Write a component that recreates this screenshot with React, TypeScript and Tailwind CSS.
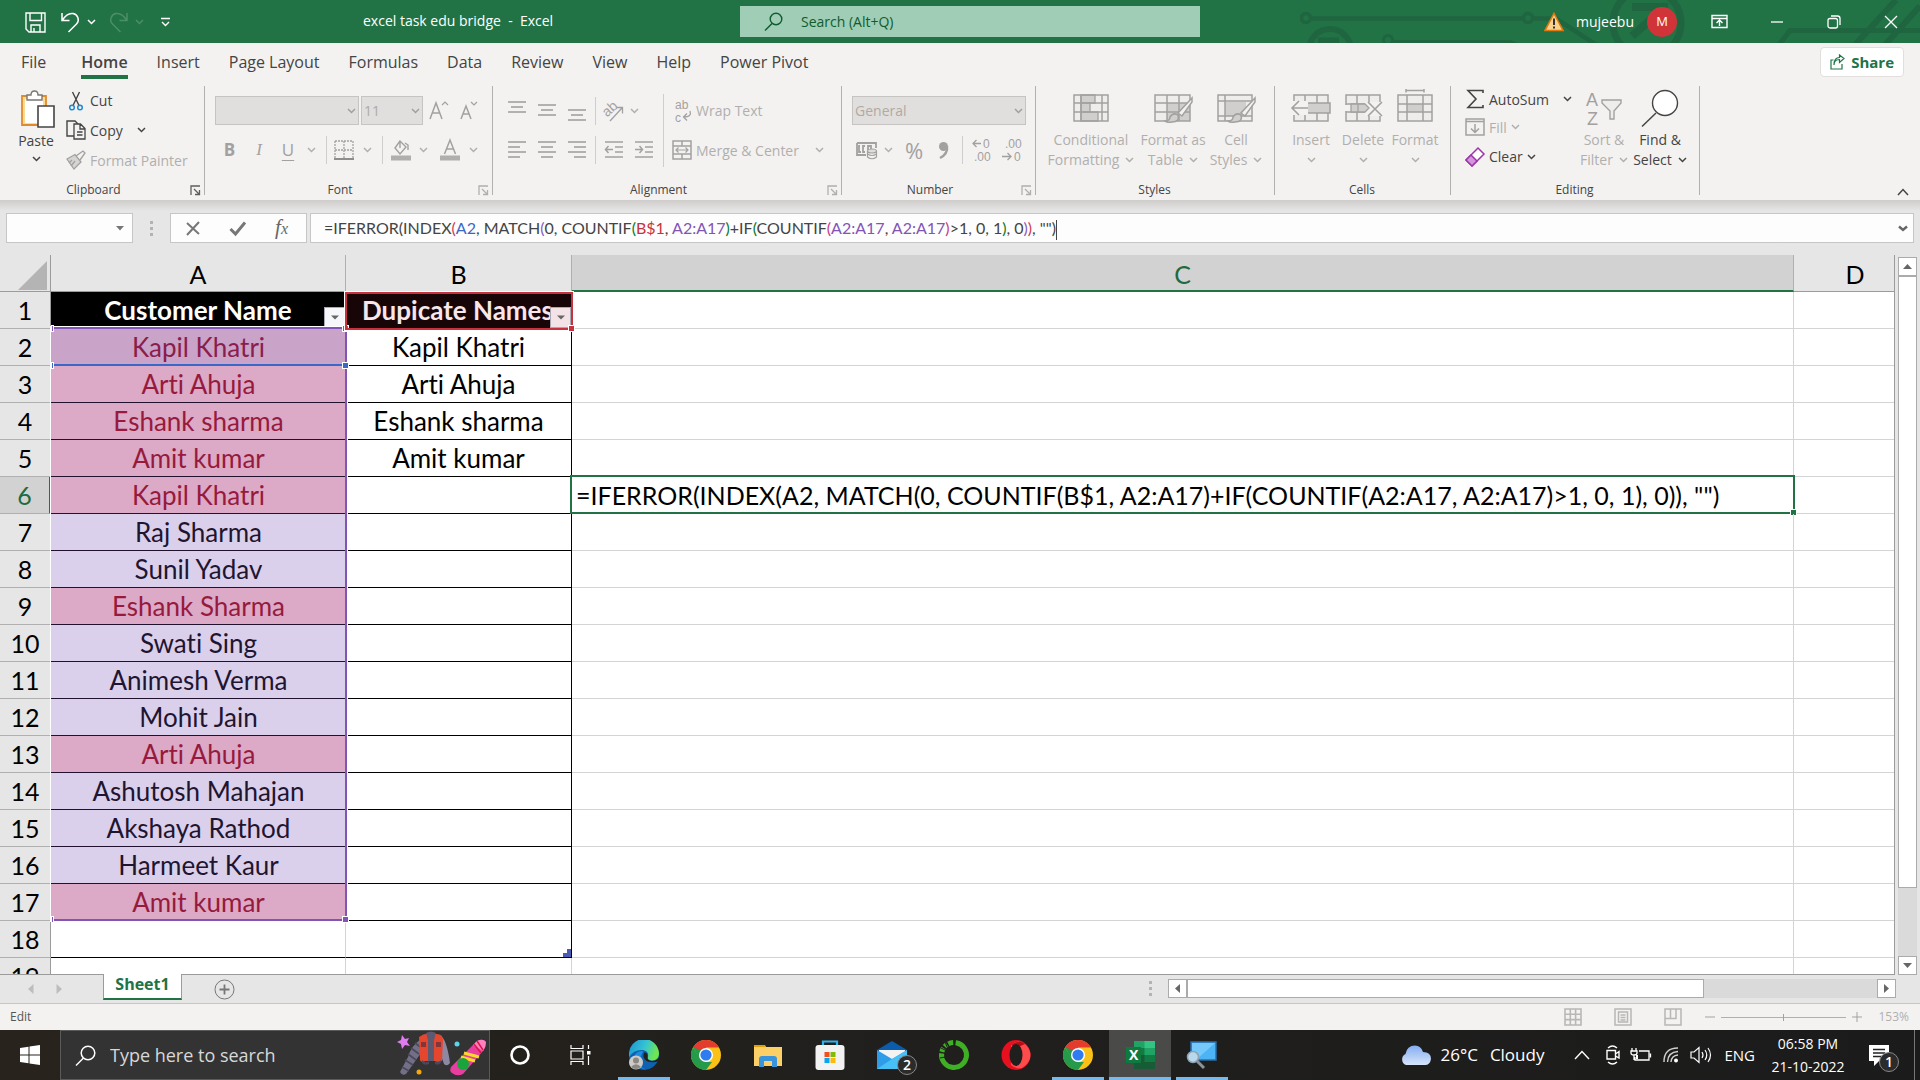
import React from "react";
import type { ReactNode } from "react";

/* ---------- small shared pieces ---------- */

function Svg({ w, h, children, className = "" }: { w: number; h: number; children: ReactNode; className?: string }) {
  return (
    <svg width={w} height={h} viewBox={`0 0 ${w} ${h}`} fill="none" className={`shrink-0 overflow-visible ${className}`} aria-hidden="true">
      {children}
    </svg>
  );
}

function Chevron({ color = "#b1afad" }: { color?: string }) {
  return (
    <Svg w={9} h={6}>
      <path d="M1 1 L4.5 4.5 L8 1" stroke={color} strokeWidth="1.5" />
    </Svg>
  );
}

const DARK = "#444444";
const ICON_FONT = "Liberation Sans, sans-serif";

function Tool({ label, className = "", children }: { label: string; className?: string; children: ReactNode }) {
  return (
    <button type="button" aria-label={label} title={label} className={`flex h-7 shrink-0 items-center justify-center ${className}`}>
      {children}
    </button>
  );
}

function Rule({ className = "" }: { className?: string }) {
  return <div className={`w-px shrink-0 bg-[#d0cecc] ${className}`} />;
}

function Group({ name, width, launcher, children }: { name: string; width: string; launcher?: string; children: ReactNode }) {
  return (
    <section aria-label={name} className={`flex h-[109px] shrink-0 flex-col border-r border-[#b3b0ad] ${width}`}>
      <div className="flex flex-1">{children}</div>
      <div className="-mb-[5px] flex h-5 items-center pr-px text-[12px] leading-5 text-[#444]">
        <span className="flex-1 text-center">{name}</span>
        {launcher && (
          <button type="button" aria-label={`${name} settings`} className="flex w-4 justify-center">
            <Svg w={11} h={11}>
              <path d="M1 10V1H10M4 4L9 9M9.5 5V9.5H5" stroke={launcher} strokeWidth="1.3" />
            </Svg>
          </button>
        )}
      </div>
    </section>
  );
}

function Lines({ rows }: { rows: [number, number, number][] }) {
  return (
    <Svg w={18} h={24}>
      {rows.map(([x1, x2, y]) => (
        <path key={y} d={`M${x1} ${y}H${x2}`} stroke="#a3a1a0" strokeWidth="1.6" />
      ))}
    </Svg>
  );
}

function SelectBox({ label, value, width }: { label: string; value: string; width: string }) {
  return (
    <div className={`relative h-[29px] shrink-0 ${width}`}>
      <select
        aria-label={label}
        disabled
        className="h-full w-full appearance-none border border-[#c6c4c2] bg-[#e1dfdd] px-0.5 text-[14px] text-[#b1a9a3] opacity-100"
      >
        <option>{value}</option>
      </select>
      <span className="pointer-events-none absolute right-[3px] top-3">
        <Chevron color="#a19f9d" />
      </span>
    </div>
  );
}

/* ---------- title bar ---------- */

function CircuitArt() {
  return (
    <svg viewBox="0 0 620 43" className="absolute right-0 top-0 h-[43px] w-[620px]" fill="none" stroke="#1f6540" aria-hidden="true">
      <circle cx="6" cy="18" r="4.5" strokeWidth="3.5" />
      <path d="M11 18.500H222M234 18.500H256L298 46" strokeWidth="4.500" />
      <circle cx="228" cy="18" r="4.500" strokeWidth="3.500" />
      <circle cx="30" cy="50" r="21" strokeWidth="6" />
      <path d="M18 40.500H39" strokeWidth="6" />
      <circle cx="88" cy="40" r="4.500" strokeWidth="3" />
      <path d="M94 42H210L220 46" strokeWidth="4" />
      <circle cx="347" cy="23" r="34" strokeWidth="7" />
      <path d="M332 7H364V36M364 8L332 36" strokeWidth="8" />
      <path d="M478 46L490 30.500H620" strokeWidth="5" />
      <path d="M554 46L596 0M584 46L620 6" strokeWidth="6" />
    </svg>
  );
}

function TitleBar() {
  return (
    <header className="relative flex h-[43px] shrink-0 items-center bg-[#217346] text-[14px] text-white">
      <CircuitArt />
      <div className="flex w-[740px] shrink-0 items-center pl-[25px]">
        <button type="button" aria-label="Save">
          <Svg w={21} h={22}>
            <path d="M1 2H20V21H4L1 18ZM5 2V9.500H16.500V2M6 21V14H15V21M9 17V21" stroke="#fff" strokeWidth="1.4" />
          </Svg>
        </button>
        <button type="button" aria-label="Undo" className="ml-[14px]">
          <Svg w={21} h={22}>
            <path d="M2 2V9.500H9.500M2.500 9C6 3.500 10 2 13 2.500C18 3.500 20 9.500 16.500 13L8.500 21" stroke="#fff" strokeWidth="1.5" />
          </Svg>
        </button>
        <button type="button" aria-label="Undo list" className="ml-[6px]"><Chevron color="#fff" /></button>
        <button type="button" aria-label="Redo" className="ml-3">
          <Svg w={21} h={22}>
            <path d="M19 2V9.500H11.500M18.500 9C15 3.500 11 2 8 2.500C3 3.500 1 9.500 4.500 13L12.500 21" stroke="#4b8f69" strokeWidth="1.5" />
          </Svg>
        </button>
        <button type="button" aria-label="Redo list" className="ml-[6px]"><Chevron color="#4b8f69" /></button>
        <button type="button" aria-label="Customize toolbar" className="ml-4">
          <Svg w={11} h={10}>
            <path d="M1 1.500H10M2 5L5.500 8.500L9 5" stroke="#fff" strokeWidth="1.4" />
          </Svg>
        </button>
        <h1 className="ml-[192px] whitespace-pre pb-0.5">excel task edu bridge  -  Excel</h1>
      </div>
      <label className="flex h-[31px] w-[460px] shrink-0 items-center bg-[#a0cdb5] pl-6">
        <Svg w={19} h={19}>
          <circle cx="12" cy="7" r="5.800" stroke="#0e5c2f" strokeWidth="1.4" />
          <path d="M8 11.500L1 18.500" stroke="#0e5c2f" strokeWidth="1.4" />
        </Svg>
        <input aria-label="Search" placeholder="Search (Alt+Q)" className="ml-[18px] flex-1 bg-transparent outline-none placeholder:text-[#0e5c2f]" />
      </label>
      <div className="relative flex flex-1 items-center justify-end">
        <Svg w={20} h={20}>
          <path d="M10 1.500L19 18.500H1Z" fill="#fbd28b" stroke="#e07a10" strokeWidth="1.6" />
          <path d="M10 6.500V13M10 14.500V16.500" stroke="#333" strokeWidth="2" />
        </Svg>
        <span className="ml-3">mujeebu</span>
        <button type="button" aria-label="Account" className="ml-[13px] size-[30px] rounded-full bg-[#d13438] text-[13px]">M</button>
        <button type="button" aria-label="Ribbon display options" className="ml-[34px]">
          <Svg w={17} h={15}>
            <path d="M1 1.500H16V13.500H1ZM1 4.500H16M8.500 12V6.500M5.500 9L8.500 6L11.500 9" stroke="#fff" strokeWidth="1.4" />
          </Svg>
        </button>
        <button type="button" aria-label="Minimize" className="ml-[42px]">
          <Svg w={14} h={14}><path d="M1 7H13" stroke="#fff" strokeWidth="1.3" /></Svg>
        </button>
        <button type="button" aria-label="Restore" className="ml-[43px]">
          <Svg w={14} h={14}>
            <rect x="1" y="3.500" width="9.500" height="9.500" rx="2" stroke="#fff" strokeWidth="1.3" />
            <path d="M4 1H10.500Q13 1 13 3.500V10" stroke="#fff" strokeWidth="1.3" />
          </Svg>
        </button>
        <button type="button" aria-label="Close" className="ml-[43px] mr-[22px]">
          <Svg w={14} h={14}><path d="M1 1L13 13M13 1L1 13" stroke="#fff" strokeWidth="1.3" /></Svg>
        </button>
      </div>
    </header>
  );
}

/* ---------- ribbon ---------- */

const TABS = ["File", "Home", "Insert", "Page Layout", "Formulas", "Data", "Review", "View", "Help", "Power Pivot"];

function TabStrip() {
  return (
    <nav className="flex h-[37px] shrink-0 items-start justify-between pl-[21px] pr-4 text-[16px] text-[#444]">
      <div className="flex gap-[29px]">
        {TABS.map((t) =>
          t === "Home" ? (
            <button key={t} type="button" className="ml-1.5 h-9 border-b-4 border-[#217346] pt-1.5 font-semibold">{t}</button>
          ) : (
            <button key={t} type="button" className="h-9 border-b-4 border-transparent pt-1.5">{t}</button>
          ),
        )}
      </div>
      <button type="button" className="mt-1 flex h-[30px] items-center gap-1.5 rounded border border-[#e1dfdd] bg-white px-[9px] font-bold text-[#217346]">
        <Svg w={15} h={16}>
          <path d="M3.500 6H1V15H12V10M4 11C4 7 6 5.500 9.500 5.500V8.500L14 4.500L9.500 1V3.500C5.500 3.500 4 6 4 11Z" stroke="#217346" strokeWidth="1.2" />
        </Svg>
        <span className="text-[15px]">Share</span>
      </button>
    </nav>
  );
}

function Clipboard() {
  return (
    <Group name="Clipboard" width="w-[205px]" launcher="#605e5c">
      <button type="button" className="ml-[14px] flex w-[44px] flex-col items-center pt-[3px] text-[14px] leading-5 text-[#444]">
        <Svg w={36} h={40}>
          <path d="M4 7H28V36H4Z" fill="#fadb8f" stroke="#e08a2c" strokeWidth="1.8" />
          <path d="M7 10H25V34H7Z" fill="#fff" />
          <path d="M9 11V6H13Q13 2 16.500 2Q20 2 20 6H24V11Z" fill="#fff" stroke="#797775" strokeWidth="1.4" />
          <path d="M20 17H36V38H20Z" fill="#fff" stroke="#444" strokeWidth="1.6" />
        </Svg>
        <span className="mt-0.5">Paste</span>
        <span className="mt-[5px]"><Chevron color={DARK} /></span>
      </button>
      <div className="ml-2 flex flex-col text-[14px] text-[#444]">
        <button type="button" className="flex h-[29px] items-center gap-1">
          <Svg w={20} h={20}>
            <path d="M6.500 1L13 14.500M13.500 1L7 14.500" stroke="#444" strokeWidth="1.4" />
            <circle cx="6" cy="16.500" r="2.300" stroke="#1e88d0" strokeWidth="1.500" />
            <circle cx="14" cy="16.500" r="2.300" stroke="#1e88d0" strokeWidth="1.500" />
          </Svg>
          Cut
        </button>
        <button type="button" className="flex h-[30px] items-center gap-1">
          <Svg w={20} h={20}>
            <path d="M8 16H1V1H9L12 4" stroke="#444" strokeWidth="1.400" />
            <path d="M8 4H14.500L19 8.500V19H8ZM14 4V9H19M11 12H16.500M11 15H16.500" fill="#f3f2f1" stroke="#444" strokeWidth="1.300" />
          </Svg>
          Copy
          <span className="ml-2.5"><Chevron color={DARK} /></span>
        </button>
        <button type="button" disabled className="flex h-[30px] items-center gap-1 text-[#b1afad]">
          <Svg w={20} h={20}>
            <path d="M1 9L9 4.500L15 12L8 19Z" fill="#d6d4d2" stroke="#a3a1a0" strokeWidth="1.300" />
            <path d="M10 6L17 1L19 3L14 10M3 13L6 10M5 16L9 11" stroke="#a3a1a0" strokeWidth="1.300" />
          </Svg>
          Format Painter
        </button>
      </div>
    </Group>
  );
}

function FontGroup() {
  return (
    <Group name="Font" width="w-[288px]" launcher="#b1afad">
      <div className="pl-2.5 pt-2.5 text-[#a3a1a0]">
        <div className="flex items-center gap-0.5">
          <SelectBox label="Font name" value="" width="w-[144px]" />
          <SelectBox label="Font size" value="11" width="w-[62px]" />
          <Tool label="Grow font" className="ml-1 w-5">
            <Svg w={20} h={22}>
              <path d="M1 19L7 3L13 19M3.500 13H10.500" stroke="#a3a1a0" strokeWidth="1.500" />
              <path d="M13 5L16 2L19 5" stroke="#a3a1a0" strokeWidth="1.200" />
            </Svg>
          </Tool>
          <Tool label="Shrink font" className="ml-2 w-5">
            <Svg w={20} h={22}>
              <path d="M2 19L7 6L12 19M4 14H10" stroke="#a3a1a0" strokeWidth="1.500" />
              <path d="M12 2L15 5L18 2" stroke="#a3a1a0" strokeWidth="1.200" />
            </Svg>
          </Tool>
        </div>
        <div className="mt-[11px] flex items-center text-[17px]">
          <Tool label="Bold" className="w-[29px] font-bold">B</Tool>
          <Tool label="Italic" className="w-[30px] font-['Liberation_Serif',serif] italic">I</Tool>
          <Tool label="Underline" className="w-7 underline underline-offset-4">U</Tool>
          <Tool label="Underline style" className="w-[18px]"><Chevron /></Tool>
          <Rule className="ml-1.5 h-7" />
          <Tool label="Borders" className="ml-px w-8">
            <Svg w={20} h={20}>
              <path d="M1 1H19V18M1 1V18M1 10H19M10 1V18" stroke="#a3a1a0" strokeWidth="1.300" strokeDasharray="2 1" />
              <path d="M0 19H20" stroke="#8f8d8b" strokeWidth="2" />
            </Svg>
          </Tool>
          <Tool label="Border style" className="w-[14px]"><Chevron /></Tool>
          <Rule className="ml-2 h-7" />
          <Tool label="Fill color" className="w-9">
            <Svg w={20} h={22}>
              <path d="M9 2L4 9L9 15L15 8ZM9 2V9M14 4L17 6V11" stroke="#a3a1a0" strokeWidth="1.400" />
              <path d="M0 19H20" stroke="#b1afad" strokeWidth="5" />
            </Svg>
          </Tool>
          <Tool label="Fill colors" className="w-2"><Chevron /></Tool>
          <Tool label="Font color" className="ml-1 w-[38px]">
            <Svg w={20} h={22}>
              <path d="M4.500 15L10 1L15.500 15M6.500 10H13.500" stroke="#a3a1a0" strokeWidth="1.500" />
              <path d="M0 19H20" stroke="#b1afad" strokeWidth="5" />
            </Svg>
          </Tool>
          <Tool label="Font colors" className="w-2"><Chevron /></Tool>
        </div>
      </div>
    </Group>
  );
}

function Alignment() {
  return (
    <Group name="Alignment" width="w-[349px]" launcher="#b1afad">
      <div className="pl-[9px] pt-2.5">
        <div className="flex h-[29px] items-center">
          <Tool label="Top align" className="w-[30px]"><Lines rows={[[0, 18, 3], [3, 15, 8], [0, 18, 13]]} /></Tool>
          <Tool label="Middle align" className="w-[30px]"><Lines rows={[[0, 18, 6], [3, 15, 11], [0, 18, 16]]} /></Tool>
          <Tool label="Bottom align" className="w-[30px]"><Lines rows={[[0, 18, 11], [3, 15, 16], [0, 18, 21]]} /></Tool>
          <Rule className="ml-[3px] h-7" />
          <Tool label="Orientation" className="w-[34px]">
            <Svg w={22} h={22}>
              <text x="2" y="14" fontSize="14" fontFamily={ICON_FONT} fill="#a3a1a0" transform="rotate(-42 8 12)">ab</text>
              <path d="M8 21L20 8M14.500 7.500H20.500V13.500" stroke="#a3a1a0" strokeWidth="1.300" />
            </Svg>
          </Tool>
          <Tool label="Orientation list" className="w-2"><Chevron /></Tool>
        </div>
        <div className="mt-[11px] flex items-center">
          <Tool label="Align left" className="w-[30px]"><Lines rows={[[0, 18, 4], [0, 12, 9], [0, 18, 14], [0, 12, 19]]} /></Tool>
          <Tool label="Center" className="w-[30px]"><Lines rows={[[0, 18, 4], [3, 15, 9], [0, 18, 14], [3, 15, 19]]} /></Tool>
          <Tool label="Align right" className="w-[30px]"><Lines rows={[[0, 18, 4], [6, 18, 9], [0, 18, 14], [6, 18, 19]]} /></Tool>
          <Rule className="ml-[3px] h-7" />
          <Tool label="Decrease indent" className="ml-[3px] w-[30px]">
            <Svg w={18} h={24}>
              <path d="M0 4H18M10 9H18M10 14H18M0 19H18M0 11.500H8M3.500 8L0.500 11.500L3.500 15" stroke="#a3a1a0" strokeWidth="1.500" />
            </Svg>
          </Tool>
          <Tool label="Increase indent" className="w-[30px]">
            <Svg w={18} h={24}>
              <path d="M0 4H18M10 9H18M10 14H18M0 19H18M0 11.500H8M4.500 8L7.500 11.500L4.500 15" stroke="#a3a1a0" strokeWidth="1.500" />
            </Svg>
          </Tool>
        </div>
      </div>
      <Rule className="ml-1 mt-2 h-[73px]" />
      <div className="pl-2 pt-2.5 text-[14px] text-[#b1afad]">
        <button type="button" disabled className="flex h-[29px] items-center gap-1">
          <Svg w={20} h={22}>
            <text x="3" y="9" fontSize="12" fontFamily={ICON_FONT} fill="#a3a1a0">ab</text>
            <text x="3" y="22" fontSize="12" fontFamily={ICON_FONT} fill="#a3a1a0">c</text>
            <path d="M18 11Q20 17 12 17M15 13.500L11.500 17L15 20.500" stroke="#a3a1a0" strokeWidth="1.300" />
          </Svg>
          Wrap Text
        </button>
        <button type="button" disabled className="mt-[11px] flex h-7 items-center gap-1">
          <Svg w={20} h={20}>
            <path d="M1 1H19V19H1ZM1 6H19M1 14H19M10 1V6M10 14V19" stroke="#a3a1a0" strokeWidth="1.500" />
            <path d="M4 10H16M6.500 7.500L4 10L6.500 12.500M13.500 7.500L16 10L13.500 12.500" stroke="#a3a1a0" strokeWidth="1.200" />
          </Svg>
          Merge &amp; Center
          <span className="ml-3"><Chevron /></span>
        </button>
      </div>
    </Group>
  );
}

function NumberGroup() {
  return (
    <Group name="Number" width="w-[194px]" launcher="#b1afad">
      <div className="pl-2.5 pt-2.5 text-[#a3a1a0]">
        <SelectBox label="Number format" value="General" width="w-[174px]" />
        <div className="mt-[11px] flex items-center">
          <Tool label="Accounting format" className="w-7">
            <Svg w={21} h={19}>
              <path d="M1 2H20V7M1 2V14H10M4 5H3V11H5M9 5H7V11H9M12 9V5H15V8" stroke="#a3a1a0" strokeWidth="1.800" />
              <ellipse cx="16" cy="10" rx="4.500" ry="2" fill="#ddd" stroke="#a3a1a0" strokeWidth="1.200" />
              <path d="M11.500 10V16Q16 19.500 20.500 16V10M11.500 13Q16 16 20.500 13" stroke="#a3a1a0" strokeWidth="1.200" />
            </Svg>
          </Tool>
          <Tool label="Currency list" className="ml-0.5 w-3"><Chevron /></Tool>
          <Tool label="Percent style" className="ml-2 w-6 text-[22px]">%</Tool>
          <Tool label="Comma style" className="w-9">
            <Svg w={12} h={18}>
              <circle cx="5.500" cy="5.500" r="4.500" fill="#a3a1a0" />
              <path d="M9 5Q10 13 2 17" stroke="#a3a1a0" strokeWidth="2.500" />
            </Svg>
          </Tool>
          <Rule className="h-7" />
          <Tool label="Increase decimal" className="w-9">
            <Svg w={20} h={22}>
              <path d="M10 4.500H2M5.500 1L2 4.500L5.500 8" stroke="#a3a1a0" strokeWidth="1.300" />
              <text x="12" y="9" fontSize="12" fontFamily={ICON_FONT} fill="#a3a1a0">0</text>
              <text x="3" y="22" fontSize="12" fontFamily={ICON_FONT} fill="#a3a1a0">.00</text>
            </Svg>
          </Tool>
          <Tool label="Decrease decimal" className="w-[26px]">
            <Svg w={20} h={22}>
              <text x="3" y="9" fontSize="12" fontFamily={ICON_FONT} fill="#a3a1a0">.00</text>
              <path d="M0 17.500H9M5.500 14L9 17.500L5.500 21" stroke="#a3a1a0" strokeWidth="1.300" />
              <text x="12" y="22" fontSize="12" fontFamily={ICON_FONT} fill="#a3a1a0">0</text>
            </Svg>
          </Tool>
        </div>
      </div>
    </Group>
  );
}

function BigTool({ icon, line1, line2, width, dark }: { icon: ReactNode; line1: string; line2?: string; width: string; dark?: boolean }) {
  return (
    <button type="button" className={`flex shrink-0 flex-col items-center whitespace-nowrap text-[14px] leading-5 ${width} ${dark ? "text-[#444]" : "text-[#b1afad]"}`}>
      <span className="mt-[3px] h-10">{icon}</span>
      <span className="mt-[1px]">{line1}</span>
      <span className="flex h-5 items-center gap-1.5">
        {line2}
        <Chevron color={dark ? DARK : "#b1afad"} />
      </span>
    </button>
  );
}

const GRID = "#a3a1a0";

function Brush() {
  return (
    <>
      <path d="M38 9L24 24L28 27L38 13Z" fill="#f3f2f1" stroke={GRID} strokeWidth="1.500" />
      <path d="M11 32Q16 32 16 28Q19 23 24 26Q26 33 18 33Q13 34 11 32Z" fill="#d0cfce" stroke={GRID} strokeWidth="1.500" />
    </>
  );
}

function StylesGroup() {
  return (
    <Group name="Styles" width="w-[239px]">
      <div className="flex pl-2.5">
        <BigTool
          width="w-[90px]" line1="Conditional" line2="Formatting"
          icon={
            <Svg w={36} h={36}>
              <path d="M1 6H35V32H1Z" fill="#eeedec" />
              <path d="M8 6H22V14H8ZM8 14H17V23H8ZM8 23H25V32H8Z" fill="#d0cfce" stroke={GRID} strokeWidth="1.300" />
              <path d="M1 6H35V32H1ZM8 6V32M1 14H35M1 23H35M29 6V32" stroke={GRID} strokeWidth="1.500" />
            </Svg>
          }
        />
        <BigTool
          width="w-[74px]" line1="Format as" line2="Table"
          icon={
            <Svg w={38} h={36}>
              <path d="M1 6H36V32H1Z" fill="#eeedec" />
              <path d="M13 14H36V32H13Z" fill="#d0cfce" />
              <path d="M1 6H36V32H1ZM13 6V32M25 6V32M1 14H36M1 23H36" stroke={GRID} strokeWidth="1.500" />
              <Brush />
            </Svg>
          }
        />
        <BigTool
          width="w-[52px]" line1="Cell" line2="Styles"
          icon={
            <Svg w={38} h={36}>
              <path d="M1 6H35V32H1Z" fill="#eeedec" />
              <path d="M8 13H29V27H8Z" fill="#d0cfce" />
              <path d="M1 6H35V32H1ZM8 6V32M1 12H35M1 27H35" stroke={GRID} strokeWidth="1.500" />
              <Brush />
            </Svg>
          }
        />
      </div>
    </Group>
  );
}

function CellsGroup() {
  return (
    <Group name="Cells" width="w-[176px]">
      <div className="flex pl-2.5">
        <BigTool
          width="w-[52px]" line1="Insert"
          icon={
            <Svg w={40} h={36}>
              <path d="M3 6H37V32H3ZM14 6V32M26 6V32M3 15H37M3 23H37" fill="#eeedec" stroke={GRID} strokeWidth="1.500" />
              <path d="M15 14H39V24H15Z" fill="#d0cfce" stroke={GRID} strokeWidth="1.500" />
              <path d="M0 12H17V26H0Z" fill="#f3f2f1" />
              <path d="M17 19H1M8 12L1 19L8 26" stroke={GRID} strokeWidth="1.600" />
            </Svg>
          }
        />
        <BigTool
          width="w-[52px]" line1="Delete"
          icon={
            <Svg w={40} h={36}>
              <path d="M3 6H37V32H3ZM14 6V32M26 6V32M3 15H37M3 23H37" fill="#eeedec" stroke={GRID} strokeWidth="1.500" />
              <path d="M0 16H8V22H0ZM22 13H40V27H22Z" fill="#f3f2f1" />
              <path d="M8 15H22L26 19L22 23H8ZM15 15V23" fill="#d0cfce" stroke={GRID} strokeWidth="1.300" />
              <path d="M25 13L39 27M39 13L25 27" stroke={GRID} strokeWidth="1.600" />
            </Svg>
          }
        />
        <BigTool
          width="w-[52px]" line1="Format"
          icon={
            <Svg w={36} h={36}>
              <path d="M1 6H35V32H1Z" fill="#eeedec" />
              <path d="M10 15H26V23H10Z" fill="#d0cfce" />
              <path d="M1 6H35V32H1ZM10 6V32M26 6V32M1 15H35M1 23H35M9 1.500H27M9 0V3.500M27 0V3.500" stroke={GRID} strokeWidth="1.500" />
            </Svg>
          }
        />
      </div>
    </Group>
  );
}

function EditingGroup() {
  return (
    <Group name="Editing" width="w-[249px]">
      <div className="flex w-[125px] shrink-0 flex-col pl-[14px] text-[14px] text-[#444]">
        <button type="button" className="flex h-[26px] items-center gap-1">
          <Svg w={20} h={20}>
            <path d="M18 4V1.500H3L11 10L3 18.500H18V16" stroke="#444" strokeWidth="1.600" />
          </Svg>
          <span className="w-[70px] text-left">AutoSum</span>
          <Chevron color={DARK} />
        </button>
        <button type="button" disabled className="flex h-[30px] items-center gap-1 text-[#b1afad]">
          <Svg w={20} h={18}>
            <path d="M1 1H19V17H1ZM1 3.500H19M10 6V14M6 10.500L10 14.500L14 10.500" stroke="#a3a1a0" strokeWidth="1.500" />
          </Svg>
          Fill
          <Chevron />
        </button>
        <button type="button" className="flex h-[29px] items-center gap-1">
          <Svg w={20} h={20}>
            <path d="M1 13L13 1L19 7L7 19Z" fill="#fff" stroke="#9b35a8" strokeWidth="1.500" />
            <path d="M1 13L6 8L12 14L7 19Z" fill="#d495dc" stroke="#9b35a8" strokeWidth="1.500" />
          </Svg>
          Clear
          <Chevron color={DARK} />
        </button>
      </div>
      <BigTool
        width="w-[56px]" line1="Sort &" line2="Filter"
        icon={
          <Svg w={38} h={38}>
            <text x="1" y="17" fontSize="18" fontFamily={ICON_FONT} fill={GRID}>A</text>
            <text x="2" y="36" fontSize="18" fontFamily={ICON_FONT} fill={GRID}>Z</text>
            <path d="M17 11H36V14L29 22V30H25V22L17 14Z" fill="#eeedec" stroke={GRID} strokeWidth="1.400" />
          </Svg>
        }
      />
      <BigTool
        dark width="w-[56px]" line1="Find &" line2="Select"
        icon={
          <Svg w={38} h={38}>
            <circle cx="24" cy="14" r="12.500" fill="#fff" stroke={DARK} strokeWidth="1.400" />
            <path d="M15 24L1 37.500" stroke={DARK} strokeWidth="1.500" />
          </Svg>
        }
      />
    </Group>
  );
}

function Ribbon() {
  return (
    <div className="flex h-[120px] shrink-0 pt-1.5">
      <Clipboard />
      <FontGroup />
      <Alignment />
      <NumberGroup />
      <StylesGroup />
      <CellsGroup />
      <EditingGroup />
      <button type="button" aria-label="Collapse ribbon" className="mb-1 ml-auto mr-[11px] self-end">
        <Svg w={12} h={8}><path d="M1 7L6 1.500L11 7" stroke={DARK} strokeWidth="1.500" /></Svg>
      </button>
    </div>
  );
}

/* ---------- formula bar ---------- */

const FORMULA: [string, string][] = [
  ["=IFERROR(INDEX", "text-[#444]"], ["(", "text-[#d13a52]"], ["A2", "text-[#3a68c8]"], [", MATCH", "text-[#444]"],
  ["(", "text-[#8b5cc4]"], ["0, COUNTIF", "text-[#444]"], ["(", "text-[#0a7a2c]"], ["B$1", "text-[#c8323c]"],
  [", ", "text-[#444]"], ["A2:A17", "text-[#8155b5]"], [")", "text-[#0a7a2c]"], ["+IF", "text-[#444]"],
  ["(", "text-[#0a7a2c]"], ["COUNTIF", "text-[#444]"], ["(", "text-[#c83a8c]"], ["A2:A17", "text-[#8155b5]"],
  [", ", "text-[#444]"], ["A2:A17", "text-[#8155b5]"], [")", "text-[#c83a8c]"], [">1, 0, 1", "text-[#444]"],
  [")", "text-[#0a7a2c]"], [", 0", "text-[#444]"], [")", "text-[#8b5cc4]"], [")", "text-[#d13a52]"], [', "")', "text-[#444]"],
];

function Dots() {
  return (
    <div className="flex flex-col gap-[3px]">
      <i className="size-[3px] bg-[#b5b3b1]" />
      <i className="size-[3px] bg-[#b5b3b1]" />
      <i className="size-[3px] bg-[#b5b3b1]" />
    </div>
  );
}

function FormulaBar() {
  return (
    <div className="flex h-[55px] shrink-0 items-start bg-linear-to-b from-[#cfcdcb] to-[#e6e6e6] to-20% pl-1.5 pr-[6px] pt-[13px]">
      <div className="flex h-[30px] w-[127px] shrink-0 items-center border border-[#c6c6c6] bg-[#fdfdfd]">
        <input aria-label="Name box" className="w-0 flex-1 bg-transparent px-1 outline-none" />
        <button type="button" aria-label="Names" className="mr-2">
          <Svg w={8} h={5}><path d="M0 0H8L4 4.500Z" fill="#777" /></Svg>
        </button>
      </div>
      <div className="ml-[17px] mt-2"><Dots /></div>
      <div className="ml-[17px] flex h-[30px] w-[137px] shrink-0 items-center justify-around border border-[#c6c6c6] bg-[#fdfdfd] pr-1">
        <button type="button" aria-label="Cancel">
          <Svg w={16} h={15}><path d="M2 2L14 13M14 1L2 14" stroke="#777" strokeWidth="2" /></Svg>
        </button>
        <button type="button" aria-label="Enter">
          <Svg w={18} h={15}><path d="M1.500 8L6.500 13L16 1.500" stroke="#777" strokeWidth="3" /></Svg>
        </button>
        <button type="button" aria-label="Insert function" className="font-['Liberation_Serif',serif] text-[21px] italic leading-6 text-[#666]">
          f<span className="text-[16px]">x</span>
        </button>
      </div>
      <div className="ml-[3px] flex h-[30px] flex-1 items-center border border-[#c6c6c6] bg-[#fdfdfd] pl-[13px] pr-[5px]">
        <div role="textbox" aria-label="Formula" className="flex-1 whitespace-pre pt-0.5 font-['Lato',sans-serif] text-[16px] leading-5">
          {FORMULA.map(([t, c], i) => <span key={i} className={c}>{t}</span>)}
          <span className="inline-block h-5 w-px bg-[#444] align-middle" />
        </div>
        <button type="button" aria-label="Expand formula bar">
          <Svg w={10} h={7}><path d="M1 1.500L5 5L9 1.500" stroke="#666" strokeWidth="2.400" /></Svg>
        </button>
      </div>
    </div>
  );
}

/* ---------- worksheet ---------- */

type Tone = "dup" | "plain";
const NAMES: [string, Tone][] = [
  ["Kapil Khatri", "dup"], ["Arti Ahuja", "dup"], ["Eshank sharma", "dup"], ["Amit kumar", "dup"], ["Kapil Khatri", "dup"],
  ["Raj Sharma", "plain"], ["Sunil Yadav", "plain"], ["Eshank Sharma", "dup"], ["Swati Sing", "plain"], ["Animesh Verma", "plain"],
  ["Mohit Jain", "plain"], ["Arti Ahuja", "dup"], ["Ashutosh Mahajan", "plain"], ["Akshaya Rathod", "plain"], ["Harmeet Kaur", "plain"],
  ["Amit kumar", "dup"],
];
const DUPES = ["Kapil Khatri", "Arti Ahuja", "Eshank sharma", "Amit kumar"];
const CELL_FORMULA = FORMULA.map(([t]) => t).join("");
const ROWS = Array.from({ length: 19 }, (_, i) => i + 1);

function FilterButton({ tint }: { tint?: boolean }) {
  return (
    <button
      type="button"
      aria-label="Filter"
      className={`absolute bottom-0 right-0 flex h-[21px] w-[21px] items-center justify-center border border-[#a9a9b4] ${tint ? "bg-[#f3e3e7]" : "bg-[#f5f7fb]"}`}
    >
      <Svg w={8} h={5}><path d="M0 0.500H8L4 4.500Z" fill="#666" /></Svg>
    </button>
  );
}

function Handle({ className }: { className: string }) {
  return <i className={`absolute h-[7px] border border-white ${className}`} />;
}

function colA(n: number) {
  if (n === 1)
    return (
      <td key="a" className="relative border-b border-r border-black bg-black text-center text-[26px] font-bold text-white">
        Customer Name
        <FilterButton />
      </td>
    );
  const item = NAMES[n - 2];
  if (!item) return <td key="a" className={`border-b border-r border-r-[#d4d4d4] ${n === 18 ? "border-b-black" : "border-b-[#d4d4d4]"}`} />;
  const look = n === 2 ? "bg-[#c9a3c8] text-[#8b1d4c]" : item[1] === "dup" ? "bg-[#dca9c7] text-[#971a3c]" : "bg-[#dad0ec] text-[#1f1530]";
  return (
    <td key="a" className={`relative border-b border-[#20122f] text-center text-[26px] ${look}`}>
      {item[0]}
      {n === 2 && (
        <div className="pointer-events-none absolute -top-[2px] left-0 z-10 h-[594px] w-[296px] border-y-2 border-r-2 border-[#8155b5] outline-1 outline-white">
          <div className="h-[37px] border-b-2 border-[#3a68c8]" />
          <Handle className="-top-1 left-0 w-[3px] bg-[#8155b5]" />
          <Handle className="-right-1 -top-1 w-[7px] bg-[#8155b5]" />
          <Handle className="-bottom-1 left-0 w-[3px] bg-[#8155b5]" />
          <Handle className="-bottom-1 -right-1 w-[7px] bg-[#8155b5]" />
          <Handle className="left-0 top-[33px] w-[3px] bg-[#3a68c8]" />
          <Handle className="-right-1 top-[33px] w-[7px] bg-[#3a68c8]" />
        </div>
      )}
    </td>
  );
}

function colB(n: number) {
  if (n === 1)
    return (
      <td key="b" className="relative whitespace-nowrap border-b border-r border-black bg-[#170508] text-[26px] font-bold text-[#f8e6ea]">
        <div className="pl-4 text-left">Dupicate Names</div>
        <FilterButton tint />
        <div className="pointer-events-none absolute -left-px top-0 z-20 h-[38px] w-[228px] border-2 border-[#c8323f] outline-1 outline-white">
          <Handle className="-bottom-1 -right-1 w-[7px] bg-[#c8323f]" />
        </div>
      </td>
    );
  if (n === 19) return <td key="b" className="border-b border-r border-[#d4d4d4]" />;
  return (
    <td key="b" className="relative border-b border-r border-black text-center text-[26px]">
      {DUPES[n - 2]}
      {n === 18 && (
        <Svg w={8} h={8} className="absolute bottom-0 right-0"><path d="M8 0V8H0V4H4V0Z" fill="#4a5ab5" /></Svg>
      )}
    </td>
  );
}

function Sheet() {
  return (
    <div className="flex min-h-0 flex-1 bg-[#e6e6e6]">
      <div className="mr-[3px] flex-1 overflow-hidden border-b border-r border-[#9b9b9b]">
        <table className="w-full table-fixed border-separate border-spacing-0 font-['Lato',sans-serif] text-[25px] leading-[30px] text-black [font-variant-ligatures:none]">
          <colgroup>
            <col className="w-[51px]" />
            <col className="w-[295px]" />
            <col className="w-[226px]" />
            <col className="w-[1222px]" />
            <col />
          </colgroup>
          <thead>
            <tr className="h-[37px] bg-[#e6e6e6]">
              <th scope="col" aria-label="Select all" className="border-b border-r border-[#9b9b9b] p-0">
                <Svg w={29} h={29} className="ml-[18px] mt-1"><path d="M29 0V29H0Z" fill="#b4b4b4" /></Svg>
              </th>
              <th scope="col" className="border-b border-r border-b-[#9b9b9b] border-r-[#b0b0b0] p-0 pt-0.5 font-normal">A</th>
              <th scope="col" className="border-b border-r border-b-[#9b9b9b] border-r-[#b0b0b0] p-0 pt-0.5 font-normal">B</th>
              <th scope="col" className="border-b-2 border-r border-b-[#217346] border-r-[#b0b0b0] bg-[#d2d2d2] p-0 pt-0.5 font-normal text-[#1e6b40]">C</th>
              <th scope="col" className="border-b border-[#9b9b9b] p-0 pl-[22px] pt-0.5 font-normal">D</th>
            </tr>
          </thead>
          <tbody className="bg-white">
            {ROWS.map((n) => (
              <tr key={n} className="h-[37px]">
                {n === 6 ? (
                  <th scope="row" className="border-b border-r-2 border-b-[#b0b0b0] border-r-[#217346] bg-[#d2d2d2] p-0 font-normal text-[#1e6b40]">{n}</th>
                ) : (
                  <th scope="row" className="border-b border-r border-b-[#b0b0b0] border-r-[#9b9b9b] bg-[#e6e6e6] p-0 font-normal">{n}</th>
                )}
                {colA(n)}
                {colB(n)}
                <td className="relative whitespace-nowrap border-b border-r border-[#d4d4d4] p-0 pl-1">
                  {n === 6 && CELL_FORMULA}
                  {n === 6 && (
                    <div className="pointer-events-none absolute -left-0.5 -top-0.5 h-[39px] w-[1225px] border-2 border-[#217346]">
                      <Handle className="-bottom-1 -right-1 w-[7px] bg-[#217346]" />
                    </div>
                  )}
                </td>
                <td className="border-b border-[#d4d4d4]" />
              </tr>
            ))}
          </tbody>
        </table>
      </div>
      <div className="mr-[3px] mt-0.5 flex w-[19px] shrink-0 flex-col bg-[#dadada]">
        <button type="button" aria-label="Scroll up" className="flex h-[19px] shrink-0 items-center justify-center border border-[#ababab] bg-white">
          <Svg w={9} h={5}><path d="M4.500 0L9 5H0Z" fill="#666" /></Svg>
        </button>
        <div className="h-[612px] shrink-0 border border-[#ababab] bg-white" />
        <button type="button" aria-label="Scroll down" className="mt-auto flex h-[19px] shrink-0 items-center justify-center border border-[#ababab] bg-white">
          <Svg w={9} h={5}><path d="M0 0H9L4.500 5Z" fill="#666" /></Svg>
        </button>
      </div>
    </div>
  );
}

function SheetTabs() {
  return (
    <div className="flex h-[29px] shrink-0 items-start border-b border-[#c6c6c6] bg-[#e6e6e6]">
      <div className="flex w-[103px] gap-[22px] pl-7 pt-[9px]">
        <button type="button" aria-label="Previous sheet"><Svg w={6} h={10}><path d="M5.500 0V10L0 5Z" fill="#bdbdbd" /></Svg></button>
        <button type="button" aria-label="Next sheet"><Svg w={6} h={10}><path d="M0.500 0V10L6 5Z" fill="#bdbdbd" /></Svg></button>
      </div>
      <button type="button" className="-mt-px h-[26px] w-[79px] border-x border-b-2 border-x-[#9b9b9b] border-b-[#217346] bg-white pb-1 text-[16px] font-bold leading-5 text-[#217346]">Sheet1</button>
      <button type="button" aria-label="New sheet" className="ml-8 mt-1">
        <Svg w={21} h={21}>
          <circle cx="10.500" cy="10.500" r="9.500" stroke="#777" />
          <path d="M10.500 5.500V15.500M5.500 10.500H15.500" stroke="#777" strokeWidth="1.800" />
        </Svg>
      </button>
      <div className="ml-auto mr-6 mt-1 flex h-[19px] w-[747px] items-center">
        <Dots />
        <div className="ml-4 flex h-[19px] flex-1 bg-[#dadada]">
          <button type="button" aria-label="Scroll left" className="flex w-[19px] items-center justify-center border border-[#ababab] bg-white">
            <Svg w={5} h={9}><path d="M5 0V9L0 4.500Z" fill="#666" /></Svg>
          </button>
          <div className="w-[517px] border border-[#ababab] bg-white" />
          <button type="button" aria-label="Scroll right" className="ml-auto flex w-[19px] items-center justify-center border border-[#ababab] bg-white">
            <Svg w={5} h={9}><path d="M0 0V9L5 4.500Z" fill="#666" /></Svg>
          </button>
        </div>
      </div>
    </div>
  );
}

function StatusBar() {
  return (
    <footer className="flex h-[26px] shrink-0 items-center bg-[#f3f2f1] pl-2.5 pr-[11px] text-[12px] text-[#555]">
      <span className="flex-1">Edit</span>
      <button type="button" aria-label="Normal view">
        <Svg w={18} h={18}><path d="M1 1H17V17H1ZM6.300 1V17M11.600 1V17M1 6.300H17M1 11.600H17" stroke="#b9b7b5" strokeWidth="1.600" /></Svg>
      </button>
      <button type="button" aria-label="Page layout view" className="ml-8">
        <Svg w={18} h={18}><path d="M1 1H17V17H1ZM4.500 4H13.500V14H4.500ZM6.500 7H11.500M6.500 9.500H11.500M6.500 12H11.500" stroke="#b9b7b5" strokeWidth="1.500" /></Svg>
      </button>
      <button type="button" aria-label="Page break view" className="ml-8">
        <Svg w={18} h={18}><path d="M1 1H17V17H1ZM1 10.500H12V1M6.500 1V10.500" stroke="#b9b7b5" strokeWidth="1.500" /></Svg>
      </button>
      <button type="button" aria-label="Zoom out" className="ml-[23px]"><Svg w={10} h={10}><path d="M0 5H10" stroke="#a3a1a0" /></Svg></button>
      <input
        type="range" aria-label="Zoom" defaultValue="50"
        className="ml-1.5 h-2 w-[125px] appearance-none bg-transparent [&::-webkit-slider-runnable-track]:h-px [&::-webkit-slider-runnable-track]:bg-[#b1afad] [&::-webkit-slider-thumb]:-mt-[3px] [&::-webkit-slider-thumb]:h-[7px] [&::-webkit-slider-thumb]:w-px [&::-webkit-slider-thumb]:appearance-none [&::-webkit-slider-thumb]:bg-[#a3a1a0]"
      />
      <button type="button" aria-label="Zoom in" className="ml-1.5"><Svg w={10} h={10}><path d="M0 5H10M5 0V10" stroke="#a3a1a0" /></Svg></button>
      <span className="ml-4 text-[#b1afad]">153%</span>
    </footer>
  );
}

/* ---------- taskbar ---------- */

function Chrome() {
  return (
    <svg width="30" height="30" viewBox="0 0 30 30" aria-hidden="true">
      <circle cx="15" cy="15" r="15" fill="#fbc116" />
      <path d="M15 15L2 7.500A15 15 0 0 1 28 7.500H15Z" fill="#e33b2e" />
      <path d="M15 30A15 15 0 0 1 2 7.500L9 18.500L15 22H21Z" fill="#249a4a" />
      <path d="M2 7.500L8.500 18.500L10 10Z" fill="#249a4a" />
      <circle cx="15" cy="15" r="7" fill="#fff" />
      <circle cx="15" cy="15" r="5.600" fill="#2f7bf0" />
    </svg>
  );
}

function Edge() {
  return (
    <svg width="30" height="30" viewBox="0 0 30 30" aria-hidden="true">
      <defs>
        <linearGradient id="edgeTop" x1="0" y1="0" x2="1" y2="0.300">
          <stop offset="0" stopColor="#1a8fd8" /><stop offset="0.600" stopColor="#36c6d0" /><stop offset="1" stopColor="#6fe650" />
        </linearGradient>
      </defs>
      <circle cx="15" cy="15" r="15" fill="#0f62b0" />
      <path d="M0 15A15 15 0 0 1 30 13C30 19 26 21 22 20.500Q18 20 19 17Q20 11 14 10Q5 9 0 17Z" fill="url(#edgeTop)" />
      <path d="M13 11Q7 11 5 17Q5 24 12 28L17 30Q9 26 11 19Q12 15 14 12Z" fill="#1d8ce0" />
      <path d="M30 21Q24 23.500 17.500 21Q13 18 15 12.500Q19 12 18.500 17Q18 20.500 22.500 21Q27 21 30 18Z" fill="#23211c" />
      <circle cx="7" cy="22.500" r="7" fill="#cfcbc6" />
      <circle cx="7" cy="20.500" r="3" fill="#8b8783" />
      <path d="M2 27Q7 21.500 12 27Q7 31 2 27Z" fill="#8b8783" />
    </svg>
  );
}

function TaskIcon({ label, children, open, active }: { label: string; children: ReactNode; open?: boolean; active?: boolean }) {
  return (
    <button type="button" aria-label={label} title={label} className={`relative flex h-[50px] w-[62px] shrink-0 items-center justify-center ${active ? "bg-[#4a4a49]" : ""}`}>
      {children}
      {open && <span className={`absolute bottom-0 h-[3px] bg-[#76b9ed] ${active ? "inset-x-0" : "inset-x-[5px]"}`} />}
    </button>
  );
}

function SearchArt() {
  return (
    <Svg w={92} h={46}>
      <path d="M5 3L8 7L12 6L10 10L13 14L8 13L5 17L4 12L0 10L4 8Z" fill="#e07cf0" />
      <path d="M24 7Q14 14 11 25L3 40Q5 44 9 42L19 28L26 18Z" fill="#736f86" />
      <path d="M18 11L26 17M14 16L22 22M11 22L19 28M8 28L16 33M5 35L12 39" stroke="#4b485c" strokeWidth="1.600" />
      <path d="M45 5Q50 10 53 31Q50 35 47 32L42 18Z" fill="#8d89a3" />
      <path d="M22 5Q28 0 34 2H38Q46 1 46 8L45 29Q40 31 38 29H29Q23 31 23 28Z" fill="#e4472d" />
      <path d="M25 28Q28 32 32 29V32Q27 34 25 31ZM38 29Q42 31 44 28V31Q41 34 38 32Z" fill="#4b485c" />
      <path d="M29 1Q34 -2 39 1L37 8V29H31V8Z" fill="#5c5970" />
      <path d="M24 10H29V15H24ZM39 10H44V15H39Z" fill="#84353a" />
      <circle cx="60" cy="12" r="2.500" fill="#5cd5e8" />
      <circle cx="22" cy="40" r="2.500" fill="#f5a90c" />
      <path d="M54 35L80 9Q86 6 89 10Q89 15 86 19L66 42Q60 45 55 41Q52 39 54 35Z" fill="#e83ea0" />
      <path d="M76 13L80 9Q86 6 89 10Q89 15 86 19Z" fill="#ff7fc0" />
      <path d="M67 21L82 25M64 25L78 29" stroke="#f6dc28" strokeWidth="3" />
      <path d="M77 12L84 21M80 9L86 18" stroke="#d81840" strokeWidth="1.500" />
      <circle cx="66" cy="32" r="6" fill="#1aa53c" />
    </Svg>
  );
}

function Badge({ children }: { children: ReactNode }) {
  return (
    <span className="absolute -bottom-[6px] -right-[10px] flex size-5 items-center justify-center rounded-full border border-[#888] bg-[#2b2b2b] text-[14px] font-semibold leading-none text-white">
      {children}
    </span>
  );
}

function Taskbar() {
  return (
    <div className="flex h-[50px] shrink-0 items-center bg-linear-to-r from-[#28231c] via-[#201f1d] to-[#1b1b1b] text-white">
      <button type="button" aria-label="Start" className="flex w-[60px] shrink-0 justify-center">
        <Svg w={20} h={20}><path d="M0 3L8.500 1.800V9.500H0ZM9.500 1.600L20 0V9.500H9.500ZM0 10.500H8.500V18.200L0 17ZM9.500 10.500H20V20L9.500 18.400Z" fill="#fff" /></Svg>
      </button>
      <label className="flex h-[50px] w-[430px] shrink-0 items-center border border-[#5a5a5a] bg-[#333333] pl-[14px]">
        <Svg w={21} h={21}>
          <circle cx="13" cy="8" r="6.800" stroke="#fff" strokeWidth="1.500" />
          <path d="M8.500 13L1 20.500" stroke="#fff" strokeWidth="1.500" />
        </Svg>
        <input aria-label="Taskbar search" placeholder="Type here to search" className="ml-[14px] w-0 flex-1 bg-transparent text-[18px] outline-none placeholder:text-[#d8d8d8]" />
        <SearchArt />
      </label>
      <button type="button" aria-label="Cortana" className="flex w-[60px] shrink-0 justify-center">
        <Svg w={20} h={20}><circle cx="10" cy="10" r="8.500" stroke="#fff" strokeWidth="2.600" /></Svg>
      </button>
      <button type="button" aria-label="Task view" className="mr-[3px] flex w-[60px] shrink-0 justify-center">
        <Svg w={21} h={20}>
          <path d="M1 0V3.500H13V0M1 6H13V14H1ZM1 20V16.500H13V20M18.500 0V4M18.500 11V20" stroke="#fff" strokeWidth="1.200" />
          <path d="M17 6H20.500V9.500H17Z" fill="#fff" />
        </Svg>
      </button>
      <TaskIcon label="Edge" open><Edge /></TaskIcon>
      <TaskIcon label="Chrome"><Chrome /></TaskIcon>
      <TaskIcon label="File Explorer">
        <Svg w={28} h={24}>
          <path d="M0 2H11L13 5H0Z" fill="#e0a008" />
          <path d="M0 4H28V23H0Z" fill="#fdd067" />
          <path d="M5 24V16Q5 13 8 13H20Q23 13 23 16V24H18V18H10V24Z" fill="#3a94dc" />
        </Svg>
      </TaskIcon>
      <TaskIcon label="Store">
        <Svg w={30} h={30}>
          <path d="M8 6V1.500H22V6" stroke="#2fb2ee" strokeWidth="2.200" />
          <rect x="0.500" y="5" width="29" height="25" rx="3" fill="#f2f2f2" />
          <path d="M9.500 12H14.500V17H9.500Z" fill="#f2501f" /><path d="M15.500 12H20.500V17H15.500Z" fill="#80bb06" />
          <path d="M9.500 18H14.500V23H9.500Z" fill="#06a5ef" /><path d="M15.500 18H20.500V23H15.500Z" fill="#fbb909" />
        </Svg>
      </TaskIcon>
      <TaskIcon label="Mail">
        <span className="relative">
          <Svg w={30} h={28}>
            <path d="M0 9L15 0L30 9V15H0Z" fill="#0b5cab" />
            <path d="M2 9H28V18L15 22L2 18Z" fill="#f3f3f3" />
            <path d="M0 9L15 18L30 9V28H0Z" fill="#2f9ce8" />
            <path d="M0 28L15 18L30 9V28Z" fill="#48c0f5" />
          </Svg>
          <Badge>2</Badge>
        </span>
      </TaskIcon>
      <TaskIcon label="Anaconda">
        <Svg w={30} h={30}>
          <circle cx="15" cy="15" r="12.500" stroke="#3fb025" strokeWidth="5" strokeDasharray="58 1.500 4 2 3 1.500 5 2.500" transform="rotate(-80 15 15)" />
          <path d="M6 2L9 9M2 8L8 11M1 18L6 17" stroke="#1f1f1d" strokeWidth="1" />
        </Svg>
      </TaskIcon>
      <TaskIcon label="Opera">
        <Svg w={30} h={30}>
          <ellipse cx="15" cy="15" rx="14.500" ry="15" fill="#e8101f" />
          <path d="M10 5Q18 -2 25 5Q34 15 25 25Q18 32 10 25Z" fill="#ff4b4b" />
          <path d="M10 5Q18 -1 24 4L15 8Z" fill="#b70d18" />
          <ellipse cx="15" cy="15" rx="6.500" ry="11" fill="#1f1f1d" />
        </Svg>
      </TaskIcon>
      <TaskIcon label="Chrome window" open><Chrome /></TaskIcon>
      <TaskIcon label="Excel" open active>
        <Svg w={29} h={28}>
          <path d="M8 0H29V28H8Z" fill="#21a366" />
          <path d="M8 0H18.500V7H8Z" fill="#21a366" /><path d="M18.500 0H29V7H18.500Z" fill="#33c481" />
          <path d="M8 7H18.500V14H8Z" fill="#107c41" /><path d="M8 14H29V28H8Z" fill="#185c37" />
          <path d="M18.500 14H29V21H18.500Z" fill="#107c41" />
          <path d="M0 6H15V22H0Z" fill="#0f7a40" />
          <text x="3" y="19" fontSize="14" fontWeight="700" fill="#fff">X</text>
        </Svg>
      </TaskIcon>
      <TaskIcon label="Magnifier" open>
        <Svg w={30} h={28}>
          <path d="M4 1H29V19H4Z" fill="#4cb4f4" stroke="#2d6ea8" strokeWidth="1.500" />
          <path d="M5 2H28L10 18H5Z" fill="#74c8fa" />
          <circle cx="6" cy="16" r="5.500" fill="#b9d8ec" stroke="#8fa3b3" strokeWidth="1.500" />
          <path d="M10 20L17 27" stroke="#8a939c" strokeWidth="3" />
        </Svg>
      </TaskIcon>

      <div className="ml-auto flex h-full items-center">
        <button type="button" className="flex items-center text-[17px]">
          <Svg w={31} h={21}>
            <defs>
              <linearGradient id="cloud" x1="0" y1="0" x2="0" y2="1"><stop offset="0" stopColor="#84acf0" /><stop offset="1" stopColor="#d7e5fb" /></linearGradient>
            </defs>
            <path d="M6 20A6 6 0 0 1 5.500 9Q7 0.500 15 0.500Q21 0.500 23 7Q31 7 31 14Q30 20 25 20Z" fill="url(#cloud)" />
          </Svg>
          <span className="ml-[9px]">26°C</span>
          <span className="ml-3">Cloudy</span>
        </button>
        <button type="button" aria-label="Hidden icons" className="ml-[30px]"><Svg w={16} h={10}><path d="M1 9L8 1.500L15 9" stroke="#fff" strokeWidth="1.400" /></Svg></button>
        <button type="button" aria-label="Meet now" className="ml-[15px]">
          <Svg w={16} h={20}><path d="M2 5.500H10.500V14H2ZM10.500 9L14 6.500V13L10.500 11M3 3Q7.500 -1 12 3M3 17Q7.500 21 12 17" stroke="#fff" strokeWidth="1.400" /></Svg>
        </button>
        <button type="button" aria-label="Battery" className="ml-2.5">
          <Svg w={20} h={16}>
            <path d="M8 4H18V13H4V10M19.500 6.500V10.500M1 1V4M5 1V4M0 4H6V6Q6 8 3 8Q0 8 0 6ZM3 8V13" stroke="#fff" strokeWidth="1.300" />
            <path d="M5 8H7V12H5Z" fill="#fff" />
          </Svg>
        </button>
        <button type="button" aria-label="Network" className="ml-3">
          <Svg w={16} h={16}>
            <path d="M1 15Q1 1 15 1M4.500 15Q5 5 15 4.500M8 15Q8.500 8.500 15 8" stroke="#d0d0d0" strokeWidth="1.400" />
            <circle cx="13" cy="13.500" r="2" fill="#fff" />
          </Svg>
        </button>
        <button type="button" aria-label="Volume" className="ml-[11px]">
          <Svg w={22} h={18}><path d="M1 6H4L9 1.500V16.500L4 12H1ZM12 6Q14 9 12 12M15 4Q18.500 9 15 14M18 2Q23 9 18 16" stroke="#fff" strokeWidth="1.200" /></Svg>
        </button>
        <button type="button" className="ml-3 text-[15px]">ENG</button>
        <button type="button" className="ml-[14px] flex w-[78px] flex-col items-center text-[14px] leading-[23px]">
          <span>06:58 PM</span>
          <span>21-10-2022</span>
        </button>
        <button type="button" aria-label="Notifications" className="ml-[22px]">
          <span className="relative block">
            <Svg w={20} h={21}>
              <path d="M0 0H20V16H10L5 21V16H0Z" fill="#fff" />
              <path d="M4 4.500H16M4 8H16M4 11.500H12" stroke="#222" strokeWidth="1.400" />
            </Svg>
            <Badge>1</Badge>
          </span>
        </button>
        <div className="ml-[25px] mr-[5px] h-full w-px bg-[#777]" />
      </div>
    </div>
  );
}

export default function App() {
  return (
    <div className="flex h-screen w-full flex-col overflow-hidden bg-[#f3f2f1] font-['Open_Sans','Noto_Sans',sans-serif]">
      <TitleBar />
      <TabStrip />
      <Ribbon />
      <FormulaBar />
      <Sheet />
      <SheetTabs />
      <StatusBar />
      <Taskbar />
    </div>
  );
}
